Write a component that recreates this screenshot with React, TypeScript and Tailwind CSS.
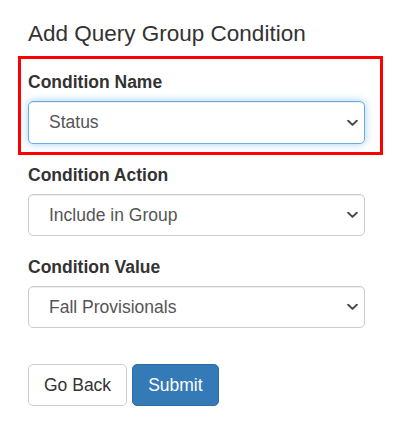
import React from "react";

function Chevron() {
  return (
    <svg
      className="pointer-events-none absolute right-[7px] top-1/2 -translate-y-1/2"
      width="11"
      height="7"
      viewBox="0 0 11 7"
      fill="none"
    >
      <path d="M1.2 1.2 L5.5 5.4 L9.8 1.2" stroke="#4a4a4a" strokeWidth="2" strokeLinecap="round" strokeLinejoin="round" />
    </svg>
  );
}

function Select({ value, focused, h }: { value: string; focused?: boolean; h: string }) {
  return (
    <div className={`relative w-[337px] ${h}`}>
      <select
        defaultValue={value}
        className={
          focused
            ? "block h-full w-full appearance-none rounded-[5px] border border-[#66afe9] bg-white pl-[20px] pr-[30px] text-[17.5px] text-[#555] outline-none shadow-[inset_0_1px_1px_rgba(0,0,0,0.075),0_0_8px_rgba(102,175,233,0.6)]"
            : "block h-full w-full appearance-none rounded-[5px] border border-[#ccc] bg-white pl-[20px] pr-[30px] text-[17.5px] text-[#555] outline-none shadow-[inset_0_1px_1px_rgba(0,0,0,0.075)]"
        }
        style={{ fontFamily: '"Liberation Sans", Arial, sans-serif' }}
      >
        <option>{value}</option>
      </select>
      <Chevron />
    </div>
  );
}

export default function App() {
  return (
    <div
      className="min-h-[439px] w-[407px] bg-white pl-[28px] pt-[22px]"
      style={{ fontFamily: '"Liberation Sans", Arial, sans-serif' }}
    >
      <h3 className="text-[22.5px] leading-[24px] font-normal text-[#333]">Add Query Group Condition</h3>

      <div className="-ml-[10px] mt-[10px] mb-[8px] w-[365px] border-[3px] border-[#ff0000] pl-[7px] pr-[15px] pt-[11px] pb-[8px]">
        <label className="mb-[6px] block text-[17.5px] leading-[25px] font-bold text-[#333]">Condition Name</label>
        <Select value="Status" focused h="h-[43px]" />
      </div>

      <div className="mb-[19px]">
        <label className="mb-[6px] block text-[17.5px] leading-[25px] font-bold text-[#333]">Condition Action</label>
        <Select value="Include in Group" h="h-[42px]" />
      </div>

      <div>
        <label className="mb-[6px] block text-[17.5px] leading-[25px] font-bold text-[#333]">Condition Value</label>
        <Select value="Fall Provisionals" h="h-[42px]" />
      </div>

      <div className="mt-[36px] flex gap-[5px]">
        <button className="flex h-[42px] items-center rounded-[5px] border border-[#ccc] bg-white px-[15px] text-[17.5px] text-[#333]">
          Go Back
        </button>
        <button className="flex h-[42px] items-center rounded-[5px] border border-[#2e6da4] bg-[#337ab7] px-[15px] text-[17.5px] text-white">
          Submit
        </button>
      </div>
    </div>
  );
}
